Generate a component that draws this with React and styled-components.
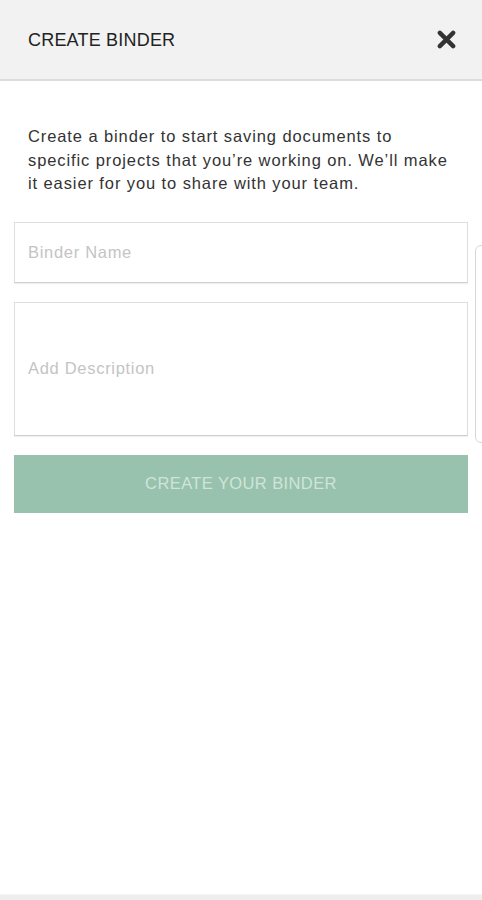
import styled, { createGlobalStyle } from "styled-components";

const GlobalStyle = createGlobalStyle`
  html, body {
    margin: 0;
    padding: 0;
    background: #fff;
  }
  body {
    font-family: "Liberation Sans", Arial, sans-serif;
  }
`;

const Page = styled.div`
  position: relative;
  width: 482px;
  height: 900px;
  display: flex;
  flex-direction: column;
  background: #fff;
  overflow: hidden;
`;

const Header = styled.header`
  height: 79px;
  flex-shrink: 0;
  display: flex;
  align-items: center;
  justify-content: space-between;
  padding: 0 26px 0 28px;
  background-color: #f2f2f2;
  border-bottom: 2px solid #dcdcdc;
  box-sizing: content-box;
`;

const Title = styled.h1`
  margin: 0;
  font-size: 18px;
  font-weight: 400;
  color: #222;
  letter-spacing: 0.2px;
  padding-top: 1px;
`;

const CloseBtn = styled.button`
  border: 0;
  background: none;
  padding: 0;
  width: 20px;
  height: 20px;
  display: flex;
  align-items: center;
  justify-content: center;
  cursor: pointer;
`;

const Body = styled.main`
  flex: 1;
  display: flex;
  flex-direction: column;
  padding: 44px 14px 0;
`;

const Intro = styled.p`
  margin: 0 0 26px;
  padding: 0 14px;
  font-size: 16.5px;
  letter-spacing: 0.9px;
  line-height: 23.5px;
  color: #333;
`;

const Form = styled.form`
  display: flex;
  flex-direction: column;
  gap: 19px;
`;

const Field = styled.input`
  box-sizing: border-box;
  width: 100%;
  height: ${({ $tall }) => ($tall ? "134px" : "61px")};
  border: 1px solid #dedede;
  border-bottom-color: #cfcfcf;
  box-shadow: 0 1px 1px rgba(0, 0, 0, 0.06);
  padding: 0 13px;
  font-family: "Liberation Sans", Arial, sans-serif;
  font-size: 16.5px;
  letter-spacing: 0.7px;
  color: #333;
  outline: none;
  &::placeholder {
    color: #c4c4c4;
  }
`;

const SubmitBtn = styled.button`
  height: 58px;
  border: 0;
  background-color: #98c2ae;
  color: #cfe5d9;
  font-family: "Liberation Sans", Arial, sans-serif;
  font-size: 16.5px;
  letter-spacing: 0.4px;
  cursor: default;
`;

const EdgeTab = styled.div`
  position: absolute;
  left: 475px;
  top: 245px;
  width: 20px;
  height: 198px;
  border: 1px solid #d8d8d8;
  border-radius: 6px 0 0 6px;
  box-sizing: border-box;
`;

const BottomBar = styled.div`
  height: 5px;
  flex-shrink: 0;
  background-color: #eeeeee;
  border-top: 1px solid #f6f6f6;
`;

const CloseIcon = () => (
  <svg width="19" height="19" viewBox="0 0 20 20">
    <path
      d="M3 3 L17 17 M17 3 L3 17"
      stroke="#333"
      strokeWidth="4.6"
      strokeLinecap="round"
    />
  </svg>
);

export default function App() {
  return (
    <>
      <GlobalStyle />
      <Page>
        <Header>
          <Title>CREATE BINDER</Title>
          <CloseBtn type="button" aria-label="close">
            <CloseIcon />
          </CloseBtn>
        </Header>
        <Body>
          <Intro>
            Create a binder to start saving documents to specific projects
            that you’re working on. We’ll make it easier for you to share
            with your team.
          </Intro>
          <Form onSubmit={(e) => e.preventDefault()}>
            <Field placeholder="Binder Name" />
            <Field $tall placeholder="Add Description" />
            <SubmitBtn type="button">CREATE YOUR BINDER</SubmitBtn>
          </Form>
        </Body>
        <BottomBar />
        <EdgeTab />
      </Page>
    </>
  );
}
